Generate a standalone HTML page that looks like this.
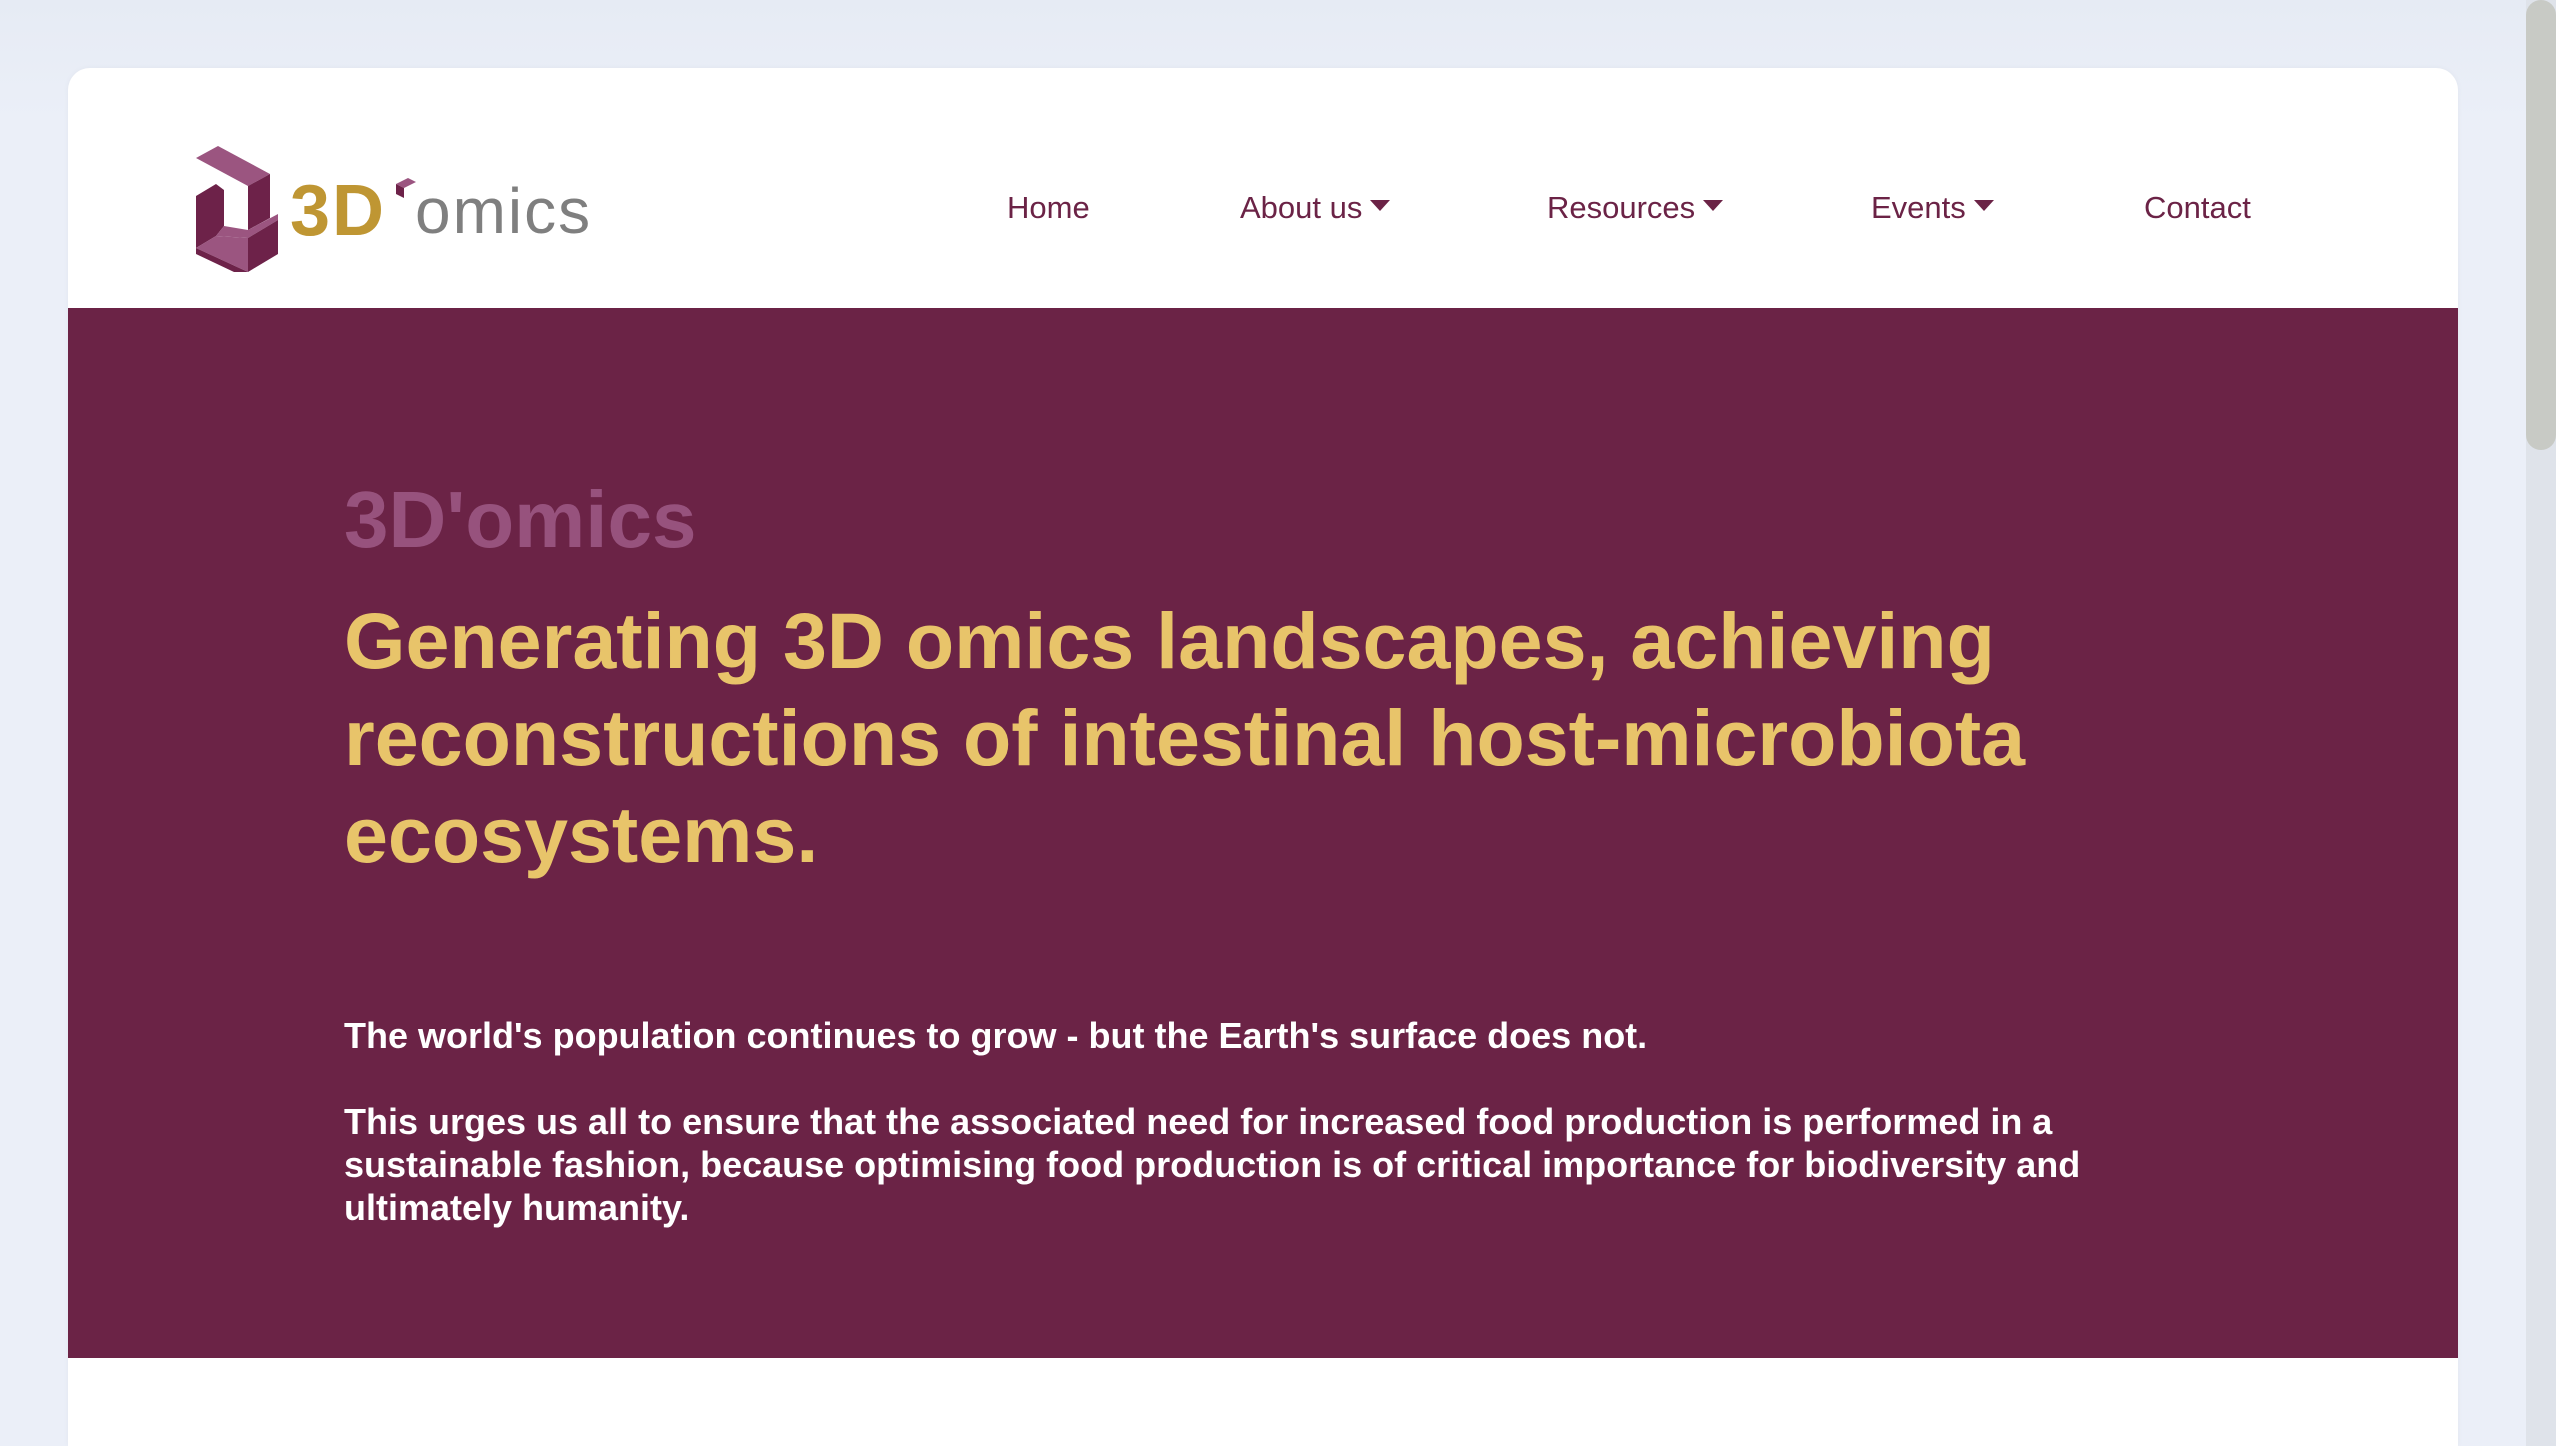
<!DOCTYPE html>
<html><head><meta charset="utf-8"><style>
html,body{margin:0;padding:0}
body{width:2556px;height:1446px;overflow:hidden;background:linear-gradient(#e6ebf4,#ebeff8 120px);font-family:"Liberation Sans",sans-serif;position:relative}
.card{position:absolute;left:68px;top:68px;width:2390px;height:1378px;background:#fff;border-radius:22px 22px 0 0;overflow:hidden;box-shadow:0 0 6px rgba(0,0,0,.04)}
.hero{position:absolute;left:0;top:240px;width:2390px;height:1050px;background:#6b2346}
.nav a{position:absolute;top:124px;font-size:31px;color:#6b2346;text-decoration:none;line-height:1;white-space:nowrap}
.caret{display:inline-block;width:0;height:0;border-left:10px solid transparent;border-right:10px solid transparent;border-top:11px solid #6b2346;vertical-align:middle;margin-left:8px;position:relative;top:-4px}
.t{position:absolute;white-space:nowrap}
.scroll{position:absolute;left:2526px;top:0;width:30px;height:1446px;background:#dfe3ea}
.thumb{position:absolute;left:2526px;top:0;width:30px;height:450px;background:#c8cac5;border-radius:15px}
</style></head><body>
<div class="card">
  <svg style="position:absolute;left:126px;top:78px" width="86" height="126" viewBox="0 0 86 126">
    <polygon points="2,12 24,0 76,28 54,40" fill="#9b5580"/>
    <polygon points="54,40 76,28 76,72 54,84" fill="#6d2249"/>
    <polygon points="2,50 22,38 22,90 2,102" fill="#6d2249"/>
    <polygon points="22,38 30,44 30,80 22,90" fill="#6d2249"/>
    <polygon points="30,80 54,84 84,68 84,74 54,92 22,90" fill="#9b5580"/>
    <polygon points="2,102 22,90 54,92 54,126" fill="#9b5580"/>
    <polygon points="54,92 84,74 84,108 54,126" fill="#6d2249"/>
    <polygon points="2,102 54,126 40,126 2,108" fill="#6d2249"/>
  </svg>
  <div class="t" style="left:222px;top:102px;font-size:72px;font-weight:bold;color:#bf9633;letter-spacing:2px">3D</div>
  <svg style="position:absolute;left:328px;top:110px" width="22" height="22" viewBox="0 0 22 22"><polygon points="0,6 12,0 20,4 8,10" fill="#9b5580"/><polygon points="0,6 8,10 8,20 0,16" fill="#6d2249"/></svg>
  <div class="t" style="left:347px;top:106px;font-size:64px;color:#7f7f7f;letter-spacing:2px">omics</div>
  <div class="nav">
    <a style="left:939px">Home</a>
    <a style="left:1172px">About us<span class="caret"></span></a>
    <a style="left:1479px">Resources<span class="caret"></span></a>
    <a style="left:1803px">Events<span class="caret"></span></a>
    <a style="left:2076px">Contact</a>
  </div>
  <div class="hero">
    <div class="t" style="left:276px;top:166px;font-size:80px;font-weight:bold;color:#97527d">3D'omics</div>
    <div class="t" style="left:276px;top:284px;font-size:79px;font-weight:bold;color:#e8c46a;line-height:97px">Generating 3D omics landscapes, achieving<br>reconstructions of intestinal host-microbiota<br>ecosystems.</div>
    <div class="t" style="left:276px;top:706px;font-size:36px;font-weight:bold;color:#fff;line-height:43px">The world's population continues to grow - but the Earth's surface does not.</div>
    <div class="t" style="left:276px;top:792px;font-size:36px;font-weight:bold;color:#fff;line-height:43px">This urges us all to ensure that the associated need for increased food production is performed in a<br>sustainable fashion, because optimising food production is of critical importance for biodiversity and<br>ultimately humanity.</div>
  </div>
</div>
<div class="scroll"></div><div class="thumb"></div>
</body></html>
